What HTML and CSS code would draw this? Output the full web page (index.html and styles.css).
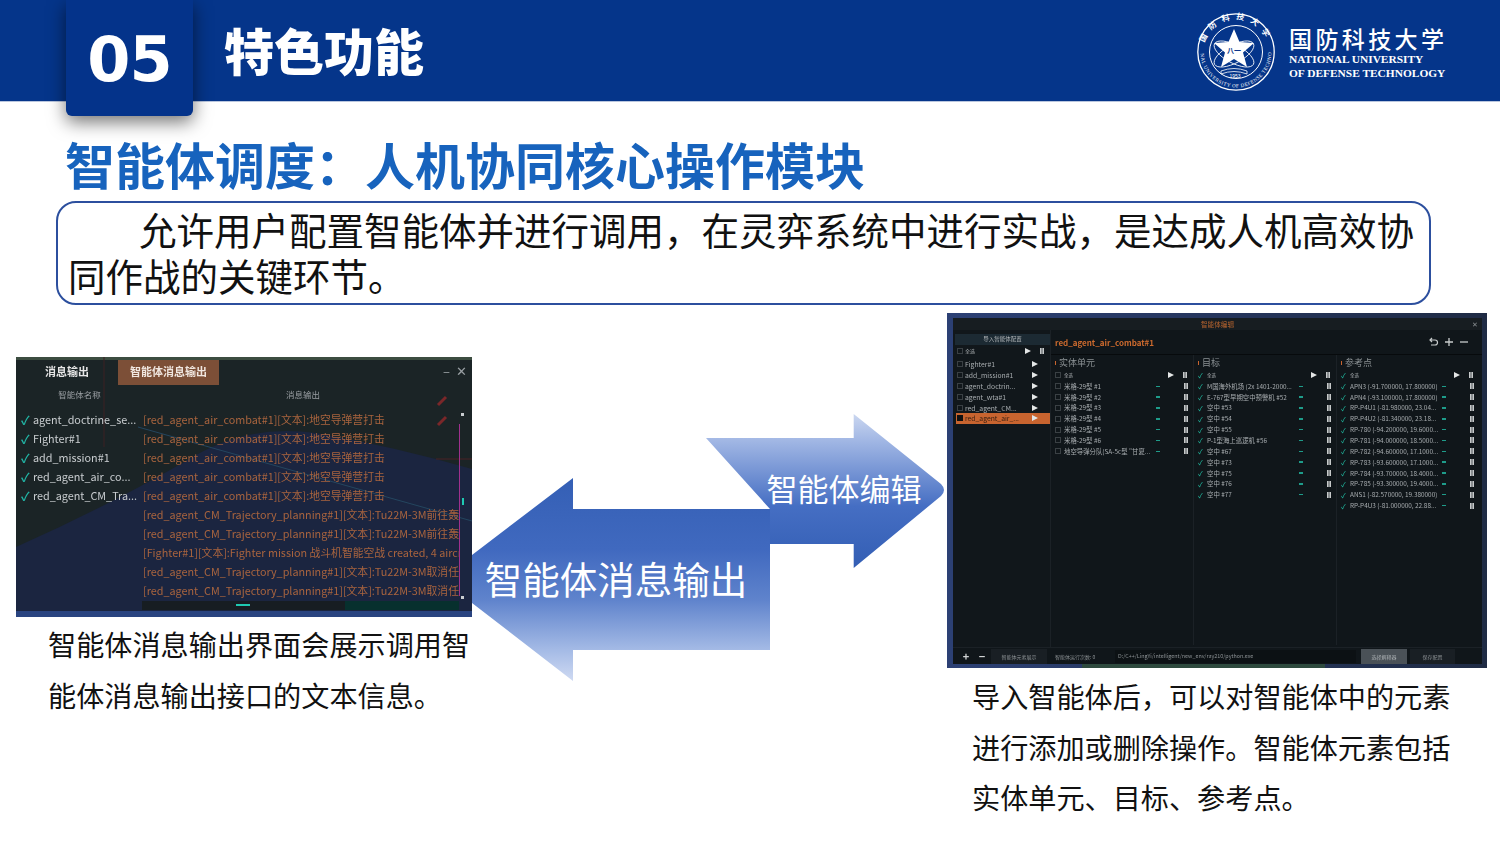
FILE: index.html
```
<!DOCTYPE html>
<html lang="zh-CN">
  <head>
    <meta charset="UTF-8" />
    <title>特色功能</title>
    <link rel="stylesheet" href="styles.css">
  </head>
  <body>
    <div class="slide">
      <!-- top bar -->
      <header class="topbar">
        <div class="badge">05</div>
        <div class="section-title">特色功能</div>
        <div class="logo">
          <svg class="seal" width="80" height="80" viewBox="0 0 80 80">
            <defs>
              <path id="ring-top" d="M7.5 40 A32.5 32.5 0 0 1 72.5 40"/>
              <path id="ring-bottom" d="M4.5 40 A35.5 35.5 0 0 0 75.5 40"/>
            </defs>
            <circle cx="40" cy="40" r="38.2" fill="none" stroke="#fff" stroke-width="1.3"/>
            <circle cx="40" cy="40" r="26.5" fill="none" stroke="#fff" stroke-width="1"/>
            <text class="seal-cn"><textPath href="#ring-top" startOffset="50%" text-anchor="middle">国防科技大学</textPath></text>
            <text class="seal-en"><textPath href="#ring-bottom" startOffset="50%" text-anchor="middle">NATIONAL UNIVERSITY OF DEFENSE TECHNOLOGY</textPath></text>
            <ellipse cx="38" cy="42" rx="22" ry="9" fill="none" stroke="#fff" stroke-width=".8" transform="rotate(28 38 42)"/>
            <ellipse cx="38" cy="42" rx="22" ry="9" fill="none" stroke="#fff" stroke-width=".8" transform="rotate(-28 38 42)"/>
            <path d="M38 17 L43.5 30 L58 31 L47 40.5 L51 55 L38 47 L25 55 L29 40.5 L18 31 L32.5 30 Z" fill="#fff"/>
            <text class="seal-star" x="38" y="41" text-anchor="middle">八一</text>
            <path d="M25 59 Q38 54 51 59 L51 62 Q38 57 25 62 Z" fill="none" stroke="#fff" stroke-width=".8"/>
            <text class="seal-year" x="39" y="66" text-anchor="middle">1953</text>
          </svg>
          <div class="logo-text">
            <div class="logo-cn">国防科技大学</div>
            <div class="logo-en">NATIONAL UNIVERSITY</div>
            <div class="logo-en">OF DEFENSE TECHNOLOGY</div>
          </div>
        </div>
      </header>

      <h1 class="page-title">智能体调度：人机协同核心操作模块</h1>

      <div class="intro">允许用户配置智能体并进行调用，在灵弈系统中进行实战，是达成人机高效协同作战的关键环节。</div>

      <div class="content">
        <!-- left: message output -->
        <div class="left-col">
          <div class="msg-shot">
            <svg class="map" width="456" height="260" viewBox="0 0 456 260" preserveAspectRatio="none">
              <rect width="456" height="260" fill="#1b2540"/>
              <path d="M0 0 H456 V112 Q380 90 300 76 Q230 66 170 104 Q90 150 0 190 Z" fill="#1b2426"/>
              <path d="M0 254 H456 V260 H0 Z" fill="#2a4480"/>
              <path d="M0 0 H456 V3 H0 Z" fill="#3c4d40"/>
              <path d="M122 70 L456 164" stroke="#24465f" stroke-width="1" fill="none"/>
              <path d="M88 0 L88 90" stroke="#3c2022" stroke-width="1" fill="none"/>
              <path d="M422 48 L430 40 M422 68 L430 60" stroke="#7a2729" stroke-width="3" fill="none"/>
              <path d="M420 102 H456" stroke="#4a2124" stroke-width="1" fill="none"/>
            </svg>
            <div class="msg-head">
              <div class="msg-tab">消息输出</div>
              <div class="msg-tab active">智能体消息输出</div>
              <div class="msg-win"><span>–</span><span>✕</span></div>
            </div>
            <div class="msg-cols">
              <div class="msg-col-a">智能体名称</div>
              <div class="msg-col-b">消息输出</div>
            </div>
            <div class="msg-body">
              <div class="msg-names">
                <div class="msg-name"><span class="tick">✓</span>agent_doctrine_se...</div>
                <div class="msg-name"><span class="tick">✓</span>Fighter#1</div>
                <div class="msg-name"><span class="tick">✓</span>add_mission#1</div>
                <div class="msg-name"><span class="tick">✓</span>red_agent_air_co...</div>
                <div class="msg-name"><span class="tick">✓</span>red_agent_CM_Tra...</div>
              </div>
              <div class="msg-lines">
                <div class="msg-line">[red_agent_air_combat#1][文本]:地空导弹营打击</div>
                <div class="msg-line">[red_agent_air_combat#1][文本]:地空导弹营打击</div>
                <div class="msg-line">[red_agent_air_combat#1][文本]:地空导弹营打击</div>
                <div class="msg-line">[red_agent_air_combat#1][文本]:地空导弹营打击</div>
                <div class="msg-line">[red_agent_air_combat#1][文本]:地空导弹营打击</div>
                <div class="msg-line">[red_agent_CM_Trajectory_planning#1][文本]:Tu22M-3M前往轰炸目标</div>
                <div class="msg-line">[red_agent_CM_Trajectory_planning#1][文本]:Tu22M-3M前往轰炸目标</div>
                <div class="msg-line">[Fighter#1][文本]:Fighter mission 战斗机智能空战 created, 4 aircraft</div>
                <div class="msg-line">[red_agent_CM_Trajectory_planning#1][文本]:Tu22M-3M取消任务</div>
                <div class="msg-line">[red_agent_CM_Trajectory_planning#1][文本]:Tu22M-3M取消任务</div>
              </div>
              <div class="msg-scroll"></div>
              <div class="msg-thumb"></div>
            </div>
            <div class="msg-hbar"><div class="msg-hdark"><div class="msg-hthumb"></div></div></div>
          </div>
          <p class="caption caption-left">智能体消息输出界面会展示调用智能体消息输出接口的文本信息。</p>
        </div>

        <!-- middle: arrows -->
        <svg class="arrows" width="475" height="270" viewBox="472 414 475 270">
          <defs>
            <linearGradient id="grad-right" x1="0" y1="0" x2="0" y2="1">
              <stop offset="0" stop-color="#cbd7f0"/>
              <stop offset=".16" stop-color="#a4b9e5"/>
              <stop offset=".6" stop-color="#456ec3"/>
              <stop offset="1" stop-color="#335eb4"/>
            </linearGradient>
            <linearGradient id="grad-left" x1="0" y1="0" x2="0" y2="1">
              <stop offset="0" stop-color="#345fb5"/>
              <stop offset=".35" stop-color="#4069bf"/>
              <stop offset=".6" stop-color="#5f83cc"/>
              <stop offset=".85" stop-color="#a5bbe6"/>
              <stop offset="1" stop-color="#cfdaf2"/>
            </linearGradient>
          </defs>
          <path d="M706 438 H853.7 V414 L941 484 Q947 490 941 496 L853.7 568 V544 H770 V509 Z" fill="url(#grad-right)"/>
          <path d="M472 555 L573 478 V509 H770 V650 H573 V681 L472 603 Z" fill="url(#grad-left)"/>
          <text class="arrow-text-small" x="844" y="501" text-anchor="middle">智能体编辑</text>
          <text class="arrow-text-big" x="616" y="594" text-anchor="middle">智能体消息输出</text>
        </svg>

        <!-- right: agent editor -->
        <div class="right-col">
          <div class="edit-shot">
            <div class="edit-win">
              <div class="edit-titlebar">智能体编辑<span class="edit-close">✕</span></div>
              <div class="edit-main">
                <div class="agent-panel">
                  <div class="import-btn">导入智能体配置</div>
                  <div class="agent-row small"><span class="box"></span><span class="agent-name">全选</span><span class="play"></span><span class="pause"></span></div>
                  <div class="agent-list">
                    <div class="agent-row"><span class="box"></span><span class="agent-name">Fighter#1</span><span class="play"></span></div>
                    <div class="agent-row"><span class="box"></span><span class="agent-name">add_mission#1</span><span class="play"></span></div>
                    <div class="agent-row"><span class="box"></span><span class="agent-name">agent_doctrin...</span><span class="play"></span></div>
                    <div class="agent-row"><span class="box"></span><span class="agent-name">agent_wta#1</span><span class="play"></span></div>
                    <div class="agent-row"><span class="box"></span><span class="agent-name">red_agent_CM...</span><span class="play"></span></div>
                    <div class="agent-row selected"><span class="box dark"></span><span class="agent-name">red_agent_air_...</span><span class="play"></span></div>
                  </div>
                </div>
                <div class="detail">
                  <div class="detail-head">
                    <span class="detail-name">red_agent_air_combat#1</span>
                    <span class="detail-tools">
                      <svg width="10" height="10" viewBox="0 0 10 10"><path d="M3 1 L1 3 L3 5 M1 3 H6 A2.5 2.5 0 0 1 6 8 H2" fill="none" stroke="#c8cccc" stroke-width="1.2"/></svg>
                      <svg width="10" height="10" viewBox="0 0 10 10"><path d="M5 1 V9 M1 5 H9" stroke="#c8cccc" stroke-width="1.3"/></svg>
                      <svg width="10" height="10" viewBox="0 0 10 10"><path d="M1 5 H9" stroke="#c8cccc" stroke-width="1.3"/></svg>
                    </span>
                  </div>
                  <div class="detail-cols">
                    <div class="elem-col">
                      <div class="elem-title">实体单元</div>
                      <div class="elem-row all"><span class="box"></span><span class="elem-name">全选</span><span class="play"></span><span class="pause"></span></div>
                      <div class="elem-row"><span class="box"></span><span class="elem-name">米格-29型 #1</span><i class="go"></i><span class="pause"></span></div>
                      <div class="elem-row"><span class="box"></span><span class="elem-name">米格-29型 #2</span><i class="go"></i><span class="pause"></span></div>
                      <div class="elem-row"><span class="box"></span><span class="elem-name">米格-29型 #3</span><i class="go"></i><span class="pause"></span></div>
                      <div class="elem-row"><span class="box"></span><span class="elem-name">米格-29型 #4</span><i class="go"></i><span class="pause"></span></div>
                      <div class="elem-row"><span class="box"></span><span class="elem-name">米格-29型 #5</span><i class="go"></i><span class="pause"></span></div>
                      <div class="elem-row"><span class="box"></span><span class="elem-name">米格-29型 #6</span><i class="go"></i><span class="pause"></span></div>
                      <div class="elem-row"><span class="box"></span><span class="elem-name">地空导弹分队(SA-5c型 "甘夏...</span><i class="go"></i><span class="pause"></span></div>
                    </div>
                    <div class="elem-col">
                      <div class="elem-title">目标</div>
                      <div class="elem-row all"><span class="tick-s">✓</span><span class="elem-name">全选</span><span class="play"></span><span class="pause"></span></div>
                      <div class="elem-row"><span class="tick-s">✓</span><span class="elem-name">M国海外机场 (2x 1401-2000...</span><i class="go"></i><span class="pause"></span></div>
                      <div class="elem-row"><span class="tick-s">✓</span><span class="elem-name">E-767型早期空中预警机 #52</span><i class="go"></i><span class="pause"></span></div>
                      <div class="elem-row"><span class="tick-s">✓</span><span class="elem-name">空中 #53</span><i class="go"></i><span class="pause"></span></div>
                      <div class="elem-row"><span class="tick-s">✓</span><span class="elem-name">空中 #54</span><i class="go"></i><span class="pause"></span></div>
                      <div class="elem-row"><span class="tick-s">✓</span><span class="elem-name">空中 #55</span><i class="go"></i><span class="pause"></span></div>
                      <div class="elem-row"><span class="tick-s">✓</span><span class="elem-name">P-1型海上巡逻机 #56</span><i class="go"></i><span class="pause"></span></div>
                      <div class="elem-row"><span class="tick-s">✓</span><span class="elem-name">空中 #67</span><i class="go"></i><span class="pause"></span></div>
                      <div class="elem-row"><span class="tick-s">✓</span><span class="elem-name">空中 #73</span><i class="go"></i><span class="pause"></span></div>
                      <div class="elem-row"><span class="tick-s">✓</span><span class="elem-name">空中 #75</span><i class="go"></i><span class="pause"></span></div>
                      <div class="elem-row"><span class="tick-s">✓</span><span class="elem-name">空中 #76</span><i class="go"></i><span class="pause"></span></div>
                      <div class="elem-row"><span class="tick-s">✓</span><span class="elem-name">空中 #77</span><i class="go"></i><span class="pause"></span></div>
                    </div>
                    <div class="elem-col">
                      <div class="elem-title">参考点</div>
                      <div class="elem-row all"><span class="tick-s">✓</span><span class="elem-name">全选</span><span class="play"></span><span class="pause"></span></div>
                      <div class="elem-row"><span class="tick-s">✓</span><span class="elem-name">APN3 (-91.700000, 17.800000)</span><i class="go"></i><span class="pause"></span></div>
                      <div class="elem-row"><span class="tick-s">✓</span><span class="elem-name">APN4 (-93.100000, 17.800000)</span><i class="go"></i><span class="pause"></span></div>
                      <div class="elem-row"><span class="tick-s">✓</span><span class="elem-name">RP-P4U1 (-81.980000, 23.04...</span><i class="go"></i><span class="pause"></span></div>
                      <div class="elem-row"><span class="tick-s">✓</span><span class="elem-name">RP-P4U2 (-81.340000, 23.18...</span><i class="go"></i><span class="pause"></span></div>
                      <div class="elem-row"><span class="tick-s">✓</span><span class="elem-name">RP-780 (-94.200000, 19.6000...</span><i class="go"></i><span class="pause"></span></div>
                      <div class="elem-row"><span class="tick-s">✓</span><span class="elem-name">RP-781 (-94.000000, 18.5000...</span><i class="go"></i><span class="pause"></span></div>
                      <div class="elem-row"><span class="tick-s">✓</span><span class="elem-name">RP-782 (-94.600000, 17.1000...</span><i class="go"></i><span class="pause"></span></div>
                      <div class="elem-row"><span class="tick-s">✓</span><span class="elem-name">RP-783 (-93.600000, 17.1000...</span><i class="go"></i><span class="pause"></span></div>
                      <div class="elem-row"><span class="tick-s">✓</span><span class="elem-name">RP-784 (-93.700000, 18.4000...</span><i class="go"></i><span class="pause"></span></div>
                      <div class="elem-row"><span class="tick-s">✓</span><span class="elem-name">RP-785 (-93.300000, 19.4000...</span><i class="go"></i><span class="pause"></span></div>
                      <div class="elem-row"><span class="tick-s">✓</span><span class="elem-name">ANS1 (-82.570000, 19.380000)</span><i class="go"></i><span class="pause"></span></div>
                      <div class="elem-row"><span class="tick-s">✓</span><span class="elem-name">RP-P4U3 (-81.000000, 22.88...</span><i class="go"></i><span class="pause"></span></div>
                    </div>
                  </div>
                </div>
              </div>
              <div class="edit-foot">
                <span class="foot-icon">+</span>
                <span class="foot-icon minus">−</span>
                <span class="foot-btn">智能体元素展示</span>
                <span class="foot-label">智能体运行次数: 0</span>
                <span class="foot-path">D:/C++/LingYi/intelligent/new_env/ray210/python.exe</span>
                <span class="foot-btn light">选择解释器</span>
                <span class="foot-btn last">保存配置</span>
              </div>
            </div>
          </div>
          <p class="caption caption-right">导入智能体后，可以对智能体中的元素进行添加或删除操作。智能体元素包括实体单元、目标、参考点。</p>
        </div>
      </div>
    </div>
  </body>
</html>
```

FILE: styles.css
```
body {
  margin: 0;
  background: #fff;
  font-family: "Noto Sans CJK SC", "Noto Sans", sans-serif;
}

.slide {
  width: 1500px;
  height: 844px;
  overflow: hidden;
}

/* top bar */
.topbar {
  display: flex;
  align-items: flex-start;
  height: 102px;
  padding-left: 66px;
  background: #05358a;
  border-bottom: 1px solid #b9c6de;
  box-sizing: border-box;
  color: #fff;
}

.badge {
  width: 127px;
  height: 116px;
  flex: none;
  box-sizing: border-box;
  padding-top: 25px;
  text-align: center;
  font-family: "DejaVu Sans", sans-serif;
  font-size: 62px;
  line-height: 70px;
  font-weight: 700;
  letter-spacing: -1px;
  background: #04338a;
  border-radius: 0 0 6px 6px;
  box-shadow: 0 6px 18px rgba(0, 0, 0, 0.55);
}

.section-title {
  margin: 14px 0 0 31px;
  font-size: 50px;
  line-height: 70px;
  font-weight: 900;
}

.logo {
  display: flex;
  align-items: center;
  margin: 12px 55px 0 auto;
}

.seal {
  flex: none;
}

.seal-cn {
  fill: #fff;
  font-size: 8px;
  letter-spacing: 6px;
  font-weight: 700;
}

.seal-en {
  fill: #fff;
  font-family: "Liberation Serif", serif;
  font-size: 5px;
  letter-spacing: 0.5px;
}

.seal-star {
  fill: #05358a;
  font-size: 7px;
  font-weight: 700;
}

.seal-year {
  fill: #fff;
  font-family: "Liberation Sans", sans-serif;
  font-size: 5px;
}

.logo-text {
  margin-left: 13px;
  width: 156px;
}

.logo-cn {
  font-family: "Noto Sans CJK SC", serif;
  font-size: 23px;
  line-height: 28px;
  font-weight: 500;
  letter-spacing: 3.4px;
  margin-bottom: 1px;
  white-space: nowrap;
}

.logo-en {
  font-family: "Liberation Serif", serif;
  font-size: 11.4px;
  line-height: 13.5px;
  font-weight: 700;
  white-space: nowrap;
}

/* headline and intro */
.page-title {
  margin: 31px 0 0 65px;
  font-size: 50px;
  line-height: 60px;
  font-weight: 700;
  color: #1763bd;
}

.intro {
  width: 1375px;
  height: 104px;
  box-sizing: border-box;
  margin: 8px 0 0 56px;
  padding: 3px 12px 0 10px;
  border: 2px solid #2c4f9e;
  border-radius: 20px;
  font-size: 37.5px;
  line-height: 46px;
  text-indent: 71px;
  color: #111;
}

/* three column content */
.content {
  display: flex;
  align-items: flex-start;
  padding-left: 16px;
}

.left-col {
  width: 456px;
  flex: none;
  margin-top: 52px;
}

.arrows {
  flex: none;
  margin-top: 109px;
}

.right-col {
  width: 540px;
  flex: none;
  margin-top: 8px;
}

.arrow-text-small {
  fill: #fff;
  font-size: 31px;
}

.arrow-text-big {
  fill: #fff;
  font-size: 37.5px;
}

.caption {
  margin: 0;
  font-size: 28.15px;
  line-height: 50.5px;
  color: #111;
}

.caption-left {
  margin-top: 1px;
  padding-left: 32px;
  width: 424px;
  line-height: 51px;
}

.caption-right {
  margin-top: 3px;
  padding-left: 25px;
  width: 482px;
}

/* message output screenshot */
.msg-shot {
  position: relative;
  height: 260px;
  overflow: hidden;
  color: #c9cdd0;
  filter: blur(0.6px);
}

.map {
  position: absolute;
  left: 0;
  top: 0;
}

.msg-head,
.msg-cols,
.msg-body,
.msg-hbar {
  position: relative;
}

.msg-head {
  display: flex;
  height: 25px;
  padding-top: 3px;
}

.msg-tab {
  width: 102px;
  text-align: center;
  font-size: 11px;
  line-height: 22px;
  font-weight: 700;
  color: #e6e6e6;
}

.msg-tab.active {
  width: 101px;
  background: #7c4f37;
  color: #f0e6df;
}

.msg-win {
  display: flex;
  gap: 6px;
  margin-left: auto;
  padding-right: 5px;
  font-size: 13px;
  line-height: 22px;
  color: #9aa0a4;
}

.msg-cols {
  display: flex;
  height: 22px;
  margin-top: -3px;
  font-size: 8.5px;
  line-height: 24px;
  color: #9a9fa3;
}

.msg-col-a {
  width: 127px;
  text-align: center;
}

.msg-col-b {
  width: 320px;
  text-align: center;
}

.msg-body {
  display: flex;
  height: 195px;
  padding-top: 6px;
  box-sizing: border-box;
}

.msg-names {
  width: 127px;
  flex: none;
}

.msg-name {
  display: flex;
  height: 19px;
  line-height: 19px;
  white-space: nowrap;
  font-size: 10.8px;
}

.tick {
  width: 17px;
  flex: none;
  padding-left: 5px;
  box-sizing: border-box;
  color: #22b6a6;
  font-size: 12px;
  font-weight: 700;
}

.msg-lines {
  width: 316px;
  flex: none;
  overflow: hidden;
  color: #a9643e;
  font-size: 10.8px;
}

.msg-line {
  height: 19px;
  line-height: 19px;
  white-space: nowrap;
}

.msg-scroll {
  width: 1px;
  height: 172px;
  margin-top: 14px;
  background: #a0308e;
}

/* little arrows at both ends of the scrollbar */
.msg-scroll::before,
.msg-scroll::after {
  content: "";
  position: absolute;
  left: 445px;
  width: 3px;
  height: 3px;
  background: #c9cdd0;
}

.msg-scroll::before {
  top: 9px;
}

.msg-scroll::after {
  top: 192px;
}

.msg-thumb {
  width: 2px;
  height: 7px;
  margin: 88px 0 0 2px;
  background: #1fc9b2;
}

.msg-hbar {
  height: 9px;
  margin: 2px 13px 0 126px;
  background: #07302e;
}

.msg-hdark {
  width: 203px;
  height: 9px;
  background: #171d22;
}

.msg-hthumb {
  width: 14px;
  height: 2px;
  position: relative;
  top: 3px;
  left: 94px;
  background: #1fc9b2;
}

/* agent editor screenshot */
.edit-shot {
  height: 355px;
  box-sizing: border-box;
  padding: 5px 5px 4px 6px;
  background:
    linear-gradient(90deg, transparent 0 25%, #2e4a3e 25% 70%, transparent 70%) bottom / 100% 4px no-repeat,
    linear-gradient(90deg, #2c4074 0, #2c4074 6px, #1f2b44 100%);
  filter: blur(0.6px);
}

.edit-win {
  display: flex;
  flex-direction: column;
  height: 100%;
  background: #10161a;
  color: #a8adb0;
  font-size: 6.6px;
}

.edit-titlebar {
  position: relative;
  flex: none;
  height: 12px;
  line-height: 12px;
  text-align: center;
  color: #b9652f;
  background: #171d21;
}

.edit-close {
  position: absolute;
  right: 4px;
  top: 0;
  color: #8a8f92;
}

.edit-main {
  display: flex;
  flex: 1;
  min-height: 0;
}

.agent-panel {
  width: 98px;
  flex: none;
  padding-top: 4px;
  box-sizing: border-box;
  background: #11171b;
  border-right: 1px solid #1b2126;
}

.import-btn {
  height: 11px;
  line-height: 11px;
  margin-left: 2px;
  text-align: center;
  font-size: 5.5px;
  background: #1c2a33;
  color: #b4b8bb;
}

.agent-list {
  margin-top: 2.5px;
}

.agent-row {
  display: flex;
  align-items: center;
  height: 10.9px;
  margin-left: 3px;
  padding-left: 1px;
  font-size: 6.8px;
  white-space: nowrap;
}

.agent-row.small {
  height: 11px;
  font-size: 5px;
}

.agent-row.selected {
  background: #c8642f;
  color: #3a2012;
}

.agent-name {
  width: 67px;
  margin-left: 2px;
  overflow: hidden;
}

.agent-row.small .agent-name {
  width: 60px;
}

.box {
  width: 4px;
  height: 4px;
  flex: none;
  border: 1px solid #3a4044;
}

.box.dark {
  background: #111;
  border-color: #111;
}

.play {
  width: 0;
  height: 0;
  flex: none;
  border-left: 6px solid #e4e6e6;
  border-top: 3px solid transparent;
  border-bottom: 3px solid transparent;
}

.pause {
  width: 4px;
  height: 6px;
  flex: none;
  border-left: 1.4px solid #c6c9ca;
  border-right: 1.4px solid #c6c9ca;
  box-sizing: border-box;
  background: #8a8e90;
}

.agent-row.small .pause {
  margin-left: 9px;
}

.detail {
  flex: 1;
  min-width: 0;
}

.detail-head {
  display: flex;
  align-items: center;
  height: 24px;
  padding: 0 13px 0 4px;
  border-bottom: 1px solid #070a0c;
}

.detail-name {
  color: #cc6a2e;
  font-size: 8px;
  font-weight: 700;
}

.detail-tools {
  display: flex;
  gap: 5px;
  margin-left: auto;
}

.detail-cols {
  display: grid;
  grid-template-columns: 143px 143px 1fr;
}

.elem-col {
  height: 290px;
  padding-left: 4px;
  border-right: 1px solid #1b2126;
  box-sizing: border-box;
}

.elem-col:last-child {
  border-right: none;
}

.elem-title {
  display: flex;
  align-items: center;
  gap: 3px;
  height: 15px;
  font-size: 9px;
  color: #8c9295;
}

.elem-title::before {
  content: "";
  width: 1px;
  height: 4px;
  background: #c8642f;
}

.elem-row {
  display: flex;
  align-items: center;
  height: 10.85px;
  white-space: nowrap;
  font-size: 6.4px;
}

.elem-row.all {
  font-size: 4.5px;
}

.elem-name {
  width: 92px;
  margin-left: 3px;
  overflow: hidden;
}

.elem-row.all .elem-name {
  width: 104px;
}

.elem-row.all .pause {
  margin-left: 9px;
}

.go {
  width: 4px;
  height: 1.5px;
  flex: none;
  margin-right: 24px;
  background: #1e9c8a;
}

.tick-s {
  width: 6px;
  flex: none;
  color: #1fb39a;
  font-size: 6.5px;
  font-weight: 700;
}

.edit-foot {
  display: flex;
  flex: none;
  align-items: center;
  height: 16px;
  padding-left: 8px;
  border-top: 1px solid #1b2126;
  font-size: 5px;
  color: #8b9093;
}

.foot-icon {
  width: 10px;
  flex: none;
  text-align: center;
  font-size: 11px;
  font-weight: 700;
  color: #d0d3d4;
}

.foot-icon.minus {
  margin: 0 4px 0 6px;
}

.foot-btn {
  width: 56px;
  flex: none;
  height: 15px;
  line-height: 15px;
  text-align: center;
  background: #191f24;
}

.foot-btn.light {
  width: 46px;
  margin-left: 5px;
  background: #4a5157;
  color: #a8adb0;
}

.foot-btn.last {
  width: 45px;
  margin-left: 3px;
}

.foot-label {
  width: 56px;
  flex: none;
  margin: 0 4px 0 8px;
}

.foot-path {
  width: 241px;
  flex: none;
  box-sizing: border-box;
  height: 13px;
  line-height: 13px;
  padding-left: 3px;
  background: #0c1114;
  font-size: 5.4px;
}
```
